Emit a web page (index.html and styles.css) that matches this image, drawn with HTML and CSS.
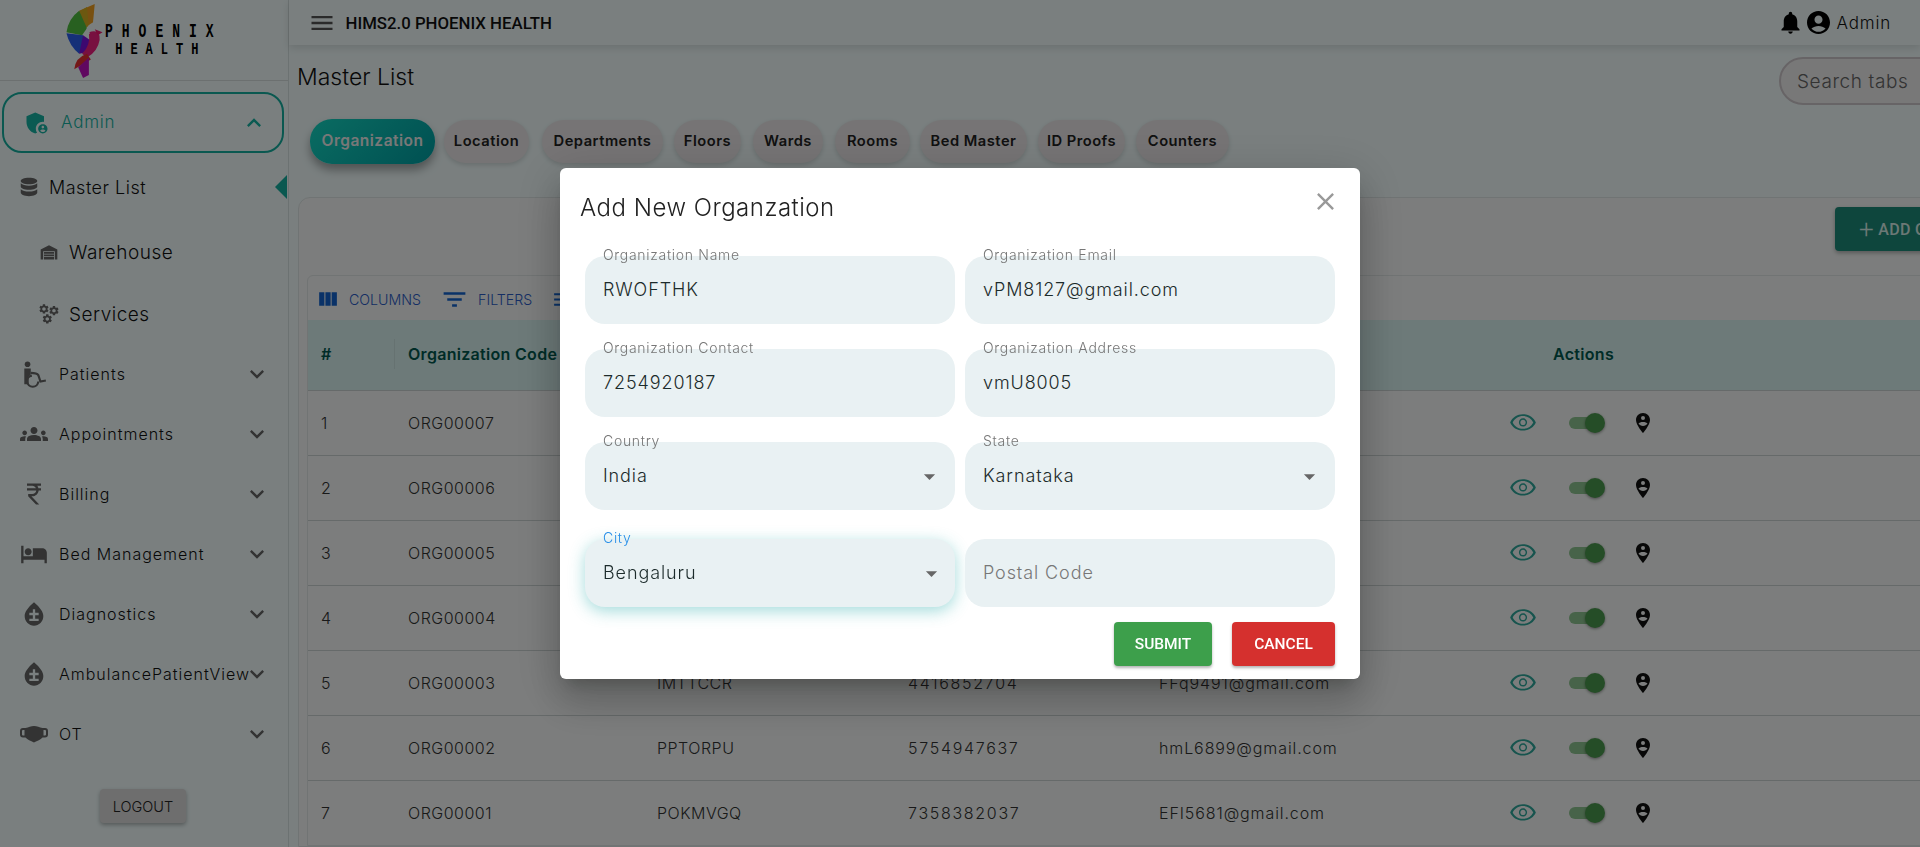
FILE: index.html
```html
<!DOCTYPE html>
<html lang="en">
<head>
  <meta charset="UTF-8" />
  <title>HIMS2.0 Phoenix Health</title>
  <link rel="stylesheet" href="styles.css">
</head>
<body>
  <div class="app">
    <aside class="sidebar">
      <div class="logo">
        <svg class="logo-bird" viewBox="0 0 40 78">
          <path fill="#f0a020" d="M30 1 L28 22 L20 24 L14 8 Z"/>
          <path fill="#d8b020" d="M22 4 L24 24 L19 26 L12 10 Z"/>
          <path fill="#50c040" d="M14 8 L22 26 L17 33 L1 30 Q3 16 14 8 Z"/>
          <path fill="#2a60f0" d="M1 31 L18 33 L20 42 L14 52 Q4 44 1 31 Z"/>
          <path fill="#7a10e0" d="M18 33 L28 40 L24 50 L14 52 Z"/>
          <path fill="#f02080" d="M24 30 Q36 26 35 38 Q33 50 22 56 L17 52 Q26 44 24 30 Z"/>
          <path fill="#f01870" d="M30 27 L38 30 L33 33 Z"/>
          <path fill="#e83030" d="M22 52 L26 58 L16 64 L9 68 Q10 56 22 52 Z"/>
          <path fill="#c010c0" d="M24 56 L24 74 L18 77 L13 66 Z"/>
          <path fill="none" stroke="#f4ffff" stroke-width="2.500" d="M29 21 Q20 25 24 32"/>
        </svg>
        <div class="logo-text">
          <span class="logo-top">PHOENIX</span>
          <span class="logo-bottom">HEALTH</span>
        </div>
      </div>

      <nav class="nav">
        <div class="nav-admin">
          <svg class="ic admin-ic" viewBox="0 0 24 24"><path d="M17 11c.34 0 .67.04 1 .09V6.27L10.5 3 3 6.27v4.91c0 4.54 3.2 8.79 7.5 9.82.55-.13 1.08-.32 1.6-.55-.69-.98-1.1-2.17-1.1-3.45 0-3.31 2.69-6 6-6z"/><path d="M17 13c-2.21 0-4 1.79-4 4s1.79 4 4 4 4-1.79 4-4-1.79-4-4-4zm0 1.38c.62 0 1.12.51 1.12 1.12s-.51 1.12-1.12 1.12-1.12-.51-1.12-1.12.5-1.12 1.12-1.12zm0 5.37c-.93 0-1.74-.46-2.24-1.17.05-.72 1.51-1.08 2.24-1.08s2.19.36 2.24 1.08c-.5.71-1.31 1.17-2.24 1.17z"/></svg>
          <span class="admin-label">Admin</span>
          <svg class="ic chev" viewBox="0 0 24 24"><path d="m12 8-6 6 1.41 1.41L12 10.83l4.59 4.58L18 14z"/></svg>
        </div>

        <div class="sub sub-first">
          <svg class="ic sub-ic" viewBox="0 0 24 24"><path d="M12 2C6.5 2 3 3.6 3 5.5S6.5 9 12 9s9-1.600 9-3.500S17.500 2 12 2zM3 8v3.500C3 13.400 6.500 15 12 15s9-1.600 9-3.500V8c-1.800 1.700-5 2.500-9 2.500S4.800 9.700 3 8zm0 6.500V18c0 1.900 3.500 4 9 4s9-2.100 9-4v-3.500c-1.800 1.700-5 2.500-9 2.500s-7.200-.8-9-2.500z"/></svg>
          <span>Master List</span>
          <i class="active-arrow"></i>
        </div>
        <div class="sub sub-nested">
          <svg class="ic sub-ic" viewBox="0 0 24 24"><path d="M2 21V9l10-5 10 5v12h-3V11H5v10zM6 12h12v2H6zm0 3h12v2H6zm0 3h12v3H6z"/></svg>
          <span>Warehouse</span>
        </div>
        <div class="sub sub-nested">
          <svg class="ic sub-ic" viewBox="0 0 24 24">
            <defs><path id="gear" d="M19.14 12.94c.04-.3.06-.61.06-.94 0-.32-.02-.64-.07-.94l2.03-1.58c.18-.14.23-.41.12-.61l-1.92-3.32c-.12-.22-.37-.29-.59-.22l-2.39.96c-.5-.38-1.03-.7-1.62-.94l-.36-2.54c-.04-.24-.24-.41-.48-.41h-3.84c-.24 0-.43.17-.47.41l-.36 2.54c-.59.24-1.13.57-1.62.94l-2.39-.96c-.22-.08-.47 0-.59.22L2.74 8.87c-.12.21-.08.47.12.61l2.03 1.58c-.05.3-.09.63-.09.94s.02.64.07.94l-2.03 1.58c-.18.14-.23.41-.12.61l1.92 3.32c.12.22.37.29.59.22l2.39-.96c.5.38 1.03.7 1.62.94l.36 2.54c.05.24.24.41.48.41h3.84c.24 0 .44-.17.47-.41l.36-2.54c.59-.24 1.13-.56 1.62-.94l2.39.96c.22.08.47 0 .59-.22l1.92-3.32c.12-.22.07-.47-.12-.61l-2.01-1.58zM12 15.6c-1.98 0-3.6-1.62-3.6-3.6s1.62-3.6 3.6-3.6 3.6 1.62 3.6 3.6-1.62 3.6-3.6 3.6z"/></defs>
            <use href="#gear" transform="translate(-1 -1) scale(.58)"/>
            <use href="#gear" transform="translate(11 1) scale(.58)"/>
            <use href="#gear" transform="translate(3 11) scale(.58)"/>
          </svg>
          <span>Services</span>
        </div>

        <div class="item">
          <svg class="ic item-ic" viewBox="0 0 26 24"><circle cx="7" cy="3" r="2.600"/><path d="M4 7h6v5.500l-2 1.500v7.500H4z"/><path fill="none" stroke="currentColor" stroke-width="2" d="M10 11c5 0 6 .5 7 2l2 6 5-1M11 13.500a5.200 5.200 0 1 0 6 5.500"/></svg>
          <span class="item-label">Patients</span>
          <svg class="ic item-chev" viewBox="0 0 24 24"><path d="M16.590 8.590 12 13.170 7.410 8.590 6 10l6 6 6-6z"/></svg>
        </div>
        <div class="item">
          <svg class="ic item-ic" viewBox="0 0 24 24"><path d="M4 13c1.100 0 2-.9 2-2s-.9-2-2-2-2 .9-2 2 .9 2 2 2zm1.130 1.100c-.37-.06-.74-.1-1.130-.1-.99 0-1.930.21-2.780.58C.48 14.900 0 15.620 0 16.430V18h4.500v-1.610c0-.83.23-1.610.63-2.290zM20 13c1.100 0 2-.9 2-2s-.9-2-2-2-2 .9-2 2 .9 2 2 2zm4 3.430c0-.81-.48-1.530-1.220-1.850-.85-.37-1.790-.58-2.780-.58-.39 0-.76.04-1.130.1.4.68.63 1.460.63 2.290V18H24v-1.570zm-7.760-2.780c-1.170-.52-2.610-.9-4.240-.9-1.630 0-3.070.39-4.240.9C6.680 14.130 6 15.210 6 16.390V18h12v-1.610c0-1.180-.68-2.260-1.760-2.740zM12 12c1.660 0 3-1.340 3-3s-1.340-3-3-3-3 1.340-3 3 1.340 3 3 3z"/></svg>
          <span class="item-label">Appointments</span>
          <svg class="ic item-chev" viewBox="0 0 24 24"><path d="M16.590 8.590 12 13.170 7.410 8.590 6 10l6 6 6-6z"/></svg>
        </div>
        <div class="item">
          <svg class="ic item-ic" viewBox="0 0 24 24"><path d="M13.660 7C13.100 5.820 11.900 5 10.500 5H6V3h12v2h-3.260c.48.58.84 1.260 1.050 2H18v2h-2.020c-.25 2.800-2.610 5-5.480 5h-.73l6.730 7h-2.770L7 14v-2h3.500c1.760 0 3.220-1.310 3.460-3H6V7h7.660z"/></svg>
          <span class="item-label">Billing</span>
          <svg class="ic item-chev" viewBox="0 0 24 24"><path d="M16.590 8.590 12 13.170 7.410 8.590 6 10l6 6 6-6z"/></svg>
        </div>
        <div class="item">
          <svg class="ic item-ic" viewBox="0 0 24 24"><path d="M7 13c1.660 0 3-1.340 3-3S8.660 7 7 7s-3 1.340-3 3 1.340 3 3 3zm12-6h-8v7H3V5H1v15h2v-3h18v3h2v-9c0-2.210-1.790-4-4-4z"/></svg>
          <span class="item-label">Bed Management</span>
          <svg class="ic item-chev" viewBox="0 0 24 24"><path d="M16.590 8.590 12 13.170 7.410 8.590 6 10l6 6 6-6z"/></svg>
        </div>
        <div class="item">
          <svg class="ic item-ic" viewBox="0 0 24 24"><path fill-rule="evenodd" d="M12 2c-5.330 4.550-8 8.480-8 11.800 0 4.980 3.800 8.200 8 8.200s8-3.220 8-8.200c0-3.320-2.670-7.250-8-11.800zm4 16H8v-2h8v2zm0-5h-3v3h-2v-3H8v-2h3V8h2v3h3v2z"/></svg>
          <span class="item-label">Diagnostics</span>
          <svg class="ic item-chev" viewBox="0 0 24 24"><path d="M16.590 8.590 12 13.170 7.410 8.590 6 10l6 6 6-6z"/></svg>
        </div>
        <div class="item">
          <svg class="ic item-ic" viewBox="0 0 24 24"><path fill-rule="evenodd" d="M12 2c-5.330 4.550-8 8.480-8 11.800 0 4.980 3.800 8.200 8 8.200s8-3.220 8-8.200c0-3.320-2.670-7.250-8-11.800zm4 16H8v-2h8v2zm0-5h-3v3h-2v-3H8v-2h3V8h2v3h3v2z"/></svg>
          <span class="item-label">AmbulancePatientView</span>
          <svg class="ic item-chev" viewBox="0 0 24 24"><path d="M16.590 8.590 12 13.170 7.410 8.590 6 10l6 6 6-6z"/></svg>
        </div>
        <div class="item">
          <svg class="ic item-ic" viewBox="0 0 28 24"><path fill-rule="evenodd" d="M14 4c3 0 5.500 1.300 8.500 2H25a3 3 0 0 1 3 3v3.500a3 3 0 0 1-3 3h-2.500c-2 2-5 3.500-8.500 5-3.500-1.500-6.500-3-8.500-5H3a3 3 0 0 1-3-3V9a3 3 0 0 1 3-3h2.500C8.500 5.300 11 4 14 4zM2 9v3.500a1 1 0 0 0 1 1h1.500V8H3a1 1 0 0 0-1 1zm24 0a1 1 0 0 0-1-1h-1.500v5.500H25a1 1 0 0 0 1-1z"/></svg>
          <span class="item-label">OT</span>
          <svg class="ic item-chev" viewBox="0 0 24 24"><path d="M16.590 8.590 12 13.170 7.410 8.590 6 10l6 6 6-6z"/></svg>
        </div>
      </nav>

      <button class="logout">LOGOUT</button>
    </aside>

    <div class="main">
      <header class="topbar">
        <svg class="ic menu-ic" viewBox="0 0 24 24"><path d="M3 18h18v-2H3v2zm0-5h18v-2H3v2zm0-7v2h18V6H3z"/></svg>
        <span class="app-title">HIMS2.0 PHOENIX HEALTH</span>
        <div class="top-right">
          <svg class="ic bell" viewBox="0 0 24 24"><path d="M12 22c1.100 0 2-.9 2-2h-4c0 1.100.89 2 2 2zm6-6v-5c0-3.070-1.640-5.640-4.500-6.320V4c0-.83-.67-1.500-1.500-1.500s-1.500.67-1.500 1.500v.68C7.630 5.360 6 7.920 6 11v5l-2 2v1h16v-1l-2-2z"/></svg>
          <svg class="ic avatar" viewBox="2 2 20 20"><path d="M12 2C6.480 2 2 6.480 2 12s4.480 10 10 10 10-4.480 10-10S17.520 2 12 2zm0 4c1.930 0 3.500 1.570 3.500 3.500S13.930 13 12 13s-3.500-1.570-3.500-3.500S10.070 6 12 6zm0 14c-2.030 0-4.430-.82-6.140-2.880C7.550 15.800 9.680 15 12 15s4.450.8 6.140 2.120C16.430 19.180 14.030 20 12 20z"/></svg>
          <span class="user">Admin</span>
        </div>
      </header>

      <div class="content">
        <div class="page-head">
          <h1>Master List</h1>
          <div class="search">Search tabs</div>
        </div>

        <div class="tabs">
          <span class="tab tab-active">Organization</span>
          <span class="tab">Location</span>
          <span class="tab">Departments</span>
          <span class="tab">Floors</span>
          <span class="tab">Wards</span>
          <span class="tab">Rooms</span>
          <span class="tab">Bed Master</span>
          <span class="tab">ID Proofs</span>
          <span class="tab">Counters</span>
        </div>

        <section class="card">
          <div class="card-top">
            <button class="add-btn"><span class="plus">+</span> ADD ORGANIZATION</button>
          </div>
          <div class="grid">
            <div class="toolbar">
              <span class="tool"><svg class="ic tool-ic" viewBox="0 0 24 24"><path d="M10 18h5V5h-5v13zm-6 0h5V5H4v13zM16 5v13h5V5h-5z"/></svg>COLUMNS</span>
              <span class="tool"><svg class="ic tool-ic wide" viewBox="0 0 24 24"><path d="M10 18h4v-2h-4v2zM3 6v2h18V6H3zm3 7h12v-2H6v2z"/></svg>FILTERS</span>
              <span class="tool"><svg class="ic tool-ic" viewBox="0 0 24 24"><path d="M3 18h18v-2H3v2zm0-5h18v-2H3v2zm0-7v2h18V6H3z"/></svg>DENSITY</span>
            </div>
            <div class="row row-head">
              <span class="cell">#</span>
              <span class="cell">Organization Code</span>
              <span class="cell">Organization Name</span>
              <span class="cell">Contact</span>
              <span class="cell">Email</span>
              <span class="cell cell-actions">Actions</span>
            </div>
            <div id="rows"></div>
          </div>
        </section>
      </div>
    </div>
  </div>

  <div class="backdrop">
    <div class="modal">
      <div class="modal-head">
        <h2>Add New Organzation</h2>
        <svg class="ic close" viewBox="0 0 24 24"><path d="M19 6.410 17.590 5 12 10.590 6.410 5 5 6.410 10.590 12 5 17.590 6.410 19 12 13.410 17.590 19 19 17.590 13.410 12z"/></svg>
      </div>
      <form class="form">
        <div class="field"><label>Organization Name</label><span class="value">RWOFTHK</span></div>
        <div class="field"><label>Organization Email</label><span class="value">vPM8127@gmail.com</span></div>
        <div class="field"><label>Organization Contact</label><span class="value">7254920187</span></div>
        <div class="field"><label>Organization Address</label><span class="value">vmU8005</span></div>
        <div class="field"><label>Country</label><span class="value">India</span><svg class="ic drop" viewBox="0 0 24 24"><path d="m7 10 5 5 5-5z"/></svg></div>
        <div class="field"><label>State</label><span class="value">Karnataka</span><svg class="ic drop" viewBox="0 0 24 24"><path d="m7 10 5 5 5-5z"/></svg></div>
        <div class="field field-last field-focus"><label>City</label><span class="value">Bengaluru</span><svg class="ic drop" viewBox="0 0 24 24"><path d="m7 10 5 5 5-5z"/></svg></div>
        <div class="field field-last"><span class="value placeholder">Postal Code</span></div>
      </form>
      <div class="modal-actions">
        <button class="btn btn-submit">SUBMIT</button>
        <button class="btn btn-cancel">CANCEL</button>
      </div>
    </div>
  </div>

  <script>
    // rows behind the dialog only show what is readable in the screen
    const data = [
      ['1', 'ORG00007', '', '', ''],
      ['2', 'ORG00006', '', '', ''],
      ['3', 'ORG00005', '', '', ''],
      ['4', 'ORG00004', '', '', ''],
      ['5', 'ORG00003', 'IMTTCCR', '4416852704', 'FFq9491@gmail.com'],
      ['6', 'ORG00002', 'PPTORPU', '5754947637', 'hmL6899@gmail.com'],
      ['7', 'ORG00001', 'POKMVGQ', '7358382037', 'EFI5681@gmail.com']
    ];
    const eye = '<svg class="ic eye" viewBox="0 0 24 24"><path d="M12 6c3.790 0 7.170 2.130 8.820 5.500C19.170 14.870 15.790 17 12 17s-7.170-2.130-8.820-5.500C4.830 8.130 8.210 6 12 6m0-1.500C7 4.500 2.730 7.400 1 11.500 2.730 15.600 7 18.500 12 18.500s9.270-2.900 11-7C21.270 7.400 17 4.500 12 4.500zm0 3.500c1.930 0 3.500 1.570 3.500 3.500S13.930 15 12 15s-3.500-1.570-3.500-3.500S10.070 8 12 8m0 1.200c-1.270 0-2.300 1.030-2.300 2.300s1.030 2.300 2.300 2.300 2.300-1.030 2.300-2.300-1.030-2.300-2.300-2.300z"/></svg>';
    const pin = '<svg class="ic pin" viewBox="0 0 14 20"><path fill-rule="evenodd" d="M7 0C3 0 0 3 0 7c0 5 7 13 7 13s7-8 7-13c0-4-3-7-7-7zm0 3a2 2 0 1 1 0 4 2 2 0 0 1 0-4zm0 6c2 0 4 .6 4.500 1.800C10.500 12 9 13 7 13s-3.500-1-4.500-2.200C3 9.600 5 9 7 9z"/></svg>';
    const rows = document.getElementById('rows');
    data.forEach(r => {
      const row = document.createElement('div');
      row.className = 'row';
      row.innerHTML = r.map(v => `<span class="cell">${v}</span>`).join('') +
        `<span class="cell cell-icons">${eye}<span class="switch"><i></i></span>${pin}</span>`;
      rows.appendChild(row);
    });
  </script>
</body>
</html>
```

FILE: styles.css
```css
* {
  box-sizing: border-box;
}
html, body {
  height: 100%;
}
body {
  margin: 0;
  overflow: hidden;
  font-family: 'Inter', 'Noto Sans', sans-serif;
  font-weight: 300;
  color: #111;
  background: #f4ffff;
}
.ic {
  fill: currentColor;
  display: block;
  flex: none;
}
.app {
  display: flex;
  height: 100vh;
  overflow: hidden;
}

/* sidebar */
.sidebar {
  width: 289px;
  flex: none;
  display: flex;
  flex-direction: column;
  background: #f4ffff;
  border-right: 1px solid #d8e4e4;
}
.logo {
  height: 81px;
  flex: none;
  display: flex;
  align-items: flex-start;
  padding: 3px 0 0 65px;
  border-bottom: 1px solid #d8e0e0;
}
.logo-bird {
  width: 40px;
  height: 76px;
}
.logo-text {
  display: flex;
  flex-direction: column;
  align-items: center;
  margin-top: 22px;
  margin-left: 0;
  font-family: 'Liberation Mono', monospace;
  font-weight: 700;
  color: #000;
  line-height: 13px;
}
.logo-top {
  font-size: 13px;
  letter-spacing: 9px;
  transform: scaleY(1.6);
  margin-right: -6px;
}
.logo-bottom {
  font-size: 12px;
  letter-spacing: 8px;
  transform: scaleY(1.4);
  margin-top: 6px;
}
.nav {
  padding: 11px 4px 0 2px;
  flex: 1;
}
.nav-admin {
  height: 61px;
  display: flex;
  align-items: center;
  padding: 0 14px 0 19px;
  border: 2px solid #14b0a0;
  border-radius: 20px;
  color: #16b4a4;
}
.admin-ic {
  width: 28px;
  height: 28px;
}
.admin-label {
  margin: -2px 0 0 10px;
  font-size: 17px;
  letter-spacing: .8px;
  flex: 1;
}
.chev {
  width: 28px;
  height: 28px;
}
.sub {
  position: relative;
  display: flex;
  align-items: center;
}
.sub-first {
  height: 68px;
  padding-left: 16px;
  gap: 9px;
  font-size: 18px;
  letter-spacing: .5px;
}
.sub-first .sub-ic {
  width: 22px;
  height: 22px;
}
.sub-nested {
  height: 62px;
  padding-left: 37px;
  gap: 10px;
  font-size: 19px;
  letter-spacing: .5px;
}
.sub-nested .sub-ic {
  width: 20px;
  height: 20px;
}
.sub-nested + .item {
  margin-top: -1px;
}
.sub-ic {
  color: #666;
}
.active-arrow {
  position: absolute;
  right: -3px;
  top: 22px;
  width: 0;
  height: 0;
  border-top: 12px solid transparent;
  border-bottom: 12px solid transparent;
  border-right: 12px solid #14b0a0;
}
.item {
  height: 60px;
  display: flex;
  align-items: center;
  padding-left: 18px;
  font-size: 16px;
}
.item-ic {
  width: 28px;
  height: 28px;
  color: #666;
}
.item-label {
  margin-left: 11px;
  width: 190px;
  white-space: nowrap;
  letter-spacing: 1px;
}
.item-chev {
  width: 28px;
  height: 28px;
  margin-left: -6px;
  color: #666;
}
.logout {
  align-self: center;
  margin: 0 0 24px -2px;
  flex: none;
  width: 86px;
  height: 34px;
  border: none;
  border-radius: 4px;
  background: #dcdcdc;
  font-family: 'Inter', sans-serif;
  font-size: 14.500px;
  font-weight: 300;
  color: #222;
  box-shadow: 0 2px 4px rgba(0,0,0,0.3);
}

/* main area */
.main {
  flex: 1;
  min-width: 0;
  display: flex;
  flex-direction: column;
}
.topbar {
  height: 45px;
  flex: none;
  display: flex;
  align-items: center;
  padding-left: 19px;
  box-shadow: 0 3px 8px rgba(0,0,0,0.12);
  background: #f4ffff;
}
.menu-ic {
  width: 28px;
  height: 28px;
  color: #555;
}
.app-title {
  margin-left: 9.500px;
  font-family: 'Roboto', sans-serif;
  font-weight: 500;
  font-size: 16.800px;
}
.top-right {
  margin-left: auto;
  display: flex;
  align-items: center;
  padding-right: 29px;
}
.bell {
  width: 27px;
  height: 27px;
  color: #000;
}
.avatar {
  width: 23px;
  height: 23px;
  margin-left: 3px;
  color: #000;
}
.user {
  margin-left: 7px;
  font-size: 17px;
  letter-spacing: .8px;
}
.content {
  width: 1720px;
  padding: 12px 0 0 8px;
}
.page-head {
  display: flex;
  justify-content: flex-start;
  align-items: flex-start;
  height: 62px;
}
.page-head h1 {
  margin: 6px 0 0;
  font-size: 23px;
  font-weight: 300;
  width: 1482px;
}
.search {
  width: 200px;
  height: 48px;
  border: 2px solid #cfc8cc;
  border-radius: 24px;
  padding: 0 16px;
  display: flex;
  align-items: center;
  font-size: 19px;
  letter-spacing: .6px;
  color: #666;
  background: #f0f0f0;
  white-space: nowrap;
}
.tabs {
  display: flex;
  align-items: center;
  padding-left: 13px;
  height: 45px;
}
.tab {
  height: 43px;
  padding-bottom: 2px;
  display: flex;
  align-items: center;
  justify-content: center;
  margin-right: 12px;
  border-radius: 22px;
  background: #ece9ea;
  box-shadow: 0 2px 5px rgba(0,0,0,0.15);
  font-weight: 600;
  font-size: 14.700px;
  letter-spacing: .5px;
  color: #222;
  white-space: nowrap;
  flex: none;
}
.tab:nth-child(1) { width: 125px; margin-right: 9px; }
.tab:nth-child(2) { width: 85px; margin-right: 13px; }
.tab:nth-child(3) { width: 121px; margin-right: 11px; }
.tab:nth-child(4) { width: 67px; margin-right: 12px; }
.tab:nth-child(5) { width: 70px; margin-right: 12px; }
.tab:nth-child(6) { width: 75px; margin-right: 10px; }
.tab:nth-child(7) { width: 107px; margin-right: 11px; }
.tab:nth-child(8) { width: 87px; margin-right: 11px; }
.tab:nth-child(9) { width: 93px; }
.tab-active {
  height: 45px;
  background: linear-gradient(135deg, #14d8c4, #00a0a4);
  color: #f0f0f0;
  font-size: 15.500px;
  box-shadow: 0 6px 10px rgba(0,0,0,0.35);
}
.card {
  margin: 33px 0 0 1px;
  background: #f8fbfa;
  border: 1px solid #e0e8e8;
  border-radius: 12px 0 0 0;
  padding: 0 0 0 8px;
}
.card-top {
  height: 77px;
  padding: 9px 0 0 1528px;
}
.add-btn {
  width: 200px;
  height: 44px;
  border: none;
  border-radius: 4px;
  background: #1d8c7a;
  color: #d8f0ea;
  font-family: 'Roboto', sans-serif;
  font-weight: 500;
  font-size: 16px;
  letter-spacing: .3px;
  text-align: left;
  padding-left: 24px;
  white-space: nowrap;
  box-shadow: 0 2px 4px rgba(0,0,0,0.3);
}
.plus {
  font-size: 26px;
  font-weight: 300;
  vertical-align: -3px;
}
.grid {
  border: 1px solid #e2e8e8;
  border-radius: 6px 0 0 0;
}
.toolbar {
  height: 44px;
  padding-top: 2px;
  display: flex;
  align-items: center;
  padding-left: 7px;
  gap: 19px;
}
.tool {
  display: flex;
  align-items: center;
  gap: 9px;
  font-size: 14.200px;
  font-weight: 300;
  color: #2b5cc8;
}
.tool-ic {
  width: 25px;
  height: 25px;
  color: #1565d0;
}
.tool-ic.wide {
  width: 29px;
  height: 29px;
}
.row {
  display: grid;
  grid-template-columns: 87px 249px 251px 251px 354px 1fr;
  height: 65px;
  align-items: center;
  border-top: 1px solid #ccd4d4;
  font-size: 16px;
  letter-spacing: .5px;
  color: #333;
}
.row .cell:nth-child(4) {
  letter-spacing: 1.700px;
}
.row .cell:nth-child(5) {
  grid-column: 5;
  letter-spacing: .9px;
}
.row-head {
  height: 70px;
  padding-bottom: 2px;
  border-top: none;
  background: #daf4f2;
  color: #00594f;
  font-weight: 600;
  letter-spacing: .3px;
}
.row-head .cell:nth-child(1) {
  border-right: 1px solid #cde4e2;
  line-height: 30px;
}
.cell {
  padding-left: 13px;
  white-space: nowrap;
}
.cell-actions {
  padding-left: 53px;
}
.cell-icons {
  display: flex;
  align-items: center;
  padding-left: 9px;
  grid-column: 6;
}
.eye {
  width: 28px;
  height: 28px;
  color: #2ea89c;
}
.switch {
  position: relative;
  margin-left: 32px;
  width: 34px;
  height: 12px;
  border-radius: 6px;
  background: #8fc792;
  display: block;
}
.switch i {
  position: absolute;
  right: -2px;
  top: -4px;
  width: 20px;
  height: 20px;
  border-radius: 50%;
  background: #4a9a4e;
  box-shadow: 0 1px 3px rgba(0,0,0,0.4);
}
.pin {
  width: 14px;
  height: 20px;
  margin-left: 33px;
  color: #111;
}

/* dialog */
.backdrop {
  position: fixed;
  inset: 0;
  display: flex;
  align-items: center;
  justify-content: center;
  background: rgba(0,0,0,0.5);
}
.modal {
  width: 800px;
  height: 511px;
  background: #fff;
  border-radius: 6px;
  box-shadow: 0 11px 15px -7px rgba(0,0,0,0.2), 0 24px 38px 3px rgba(0,0,0,0.14), 0 9px 46px 8px rgba(0,0,0,0.12);
  padding: 0 25px;
}
.modal-head {
  height: 88px;
  position: relative;
}
.modal-head h2 {
  margin: 0;
  padding: 25px 0 0;
  margin-left: -5px;
  font-size: 24px;
  letter-spacing: .5px;
  font-weight: 300;
  color: #222;
}
.close {
  position: absolute;
  right: -5px;
  top: 19px;
  width: 29px;
  height: 29px;
  color: #999;
}
.form {
  display: grid;
  grid-template-columns: 370px 370px;
  column-gap: 10px;
  row-gap: 25px;
}
.field {
  position: relative;
  height: 68px;
  background: #e9f1f3;
  border-radius: 20px;
  display: flex;
  align-items: center;
  padding: 0 18px;
}
.field label {
  position: absolute;
  left: 18px;
  top: -10px;
  font-size: 14px;
  letter-spacing: .7px;
  color: #777;
}
.field-last {
  margin-top: 4px;
}
.field-focus {
  box-shadow: 0 4px 16px rgba(50,175,175,0.45);
}
.field-focus label {
  color: #2a90e8;
}
.field-focus .drop {
  margin-right: -8px;
}
.value {
  flex: 1;
  margin-top: -2px;
  font-size: 18px;
  font-weight: 300;
  letter-spacing: .9px;
  color: #1c2b2b;
}
.placeholder {
  color: #777;
}
.drop {
  width: 27px;
  height: 27px;
  margin-right: -6px;
  color: #666;
}
.modal-actions {
  display: flex;
  justify-content: flex-end;
  gap: 20px;
  margin-top: 15px;
}
.btn {
  height: 44px;
  border: none;
  border-radius: 4px;
  color: #fff;
  font-family: 'Roboto', sans-serif;
  font-weight: 500;
  font-size: 15.500px;
  box-shadow: 0 2px 3px rgba(0,0,0,0.3);
}
.btn-submit {
  width: 98px;
  background: #3d9f4b;
}
.btn-cancel {
  width: 103px;
  background: #d5302e;
}
```
